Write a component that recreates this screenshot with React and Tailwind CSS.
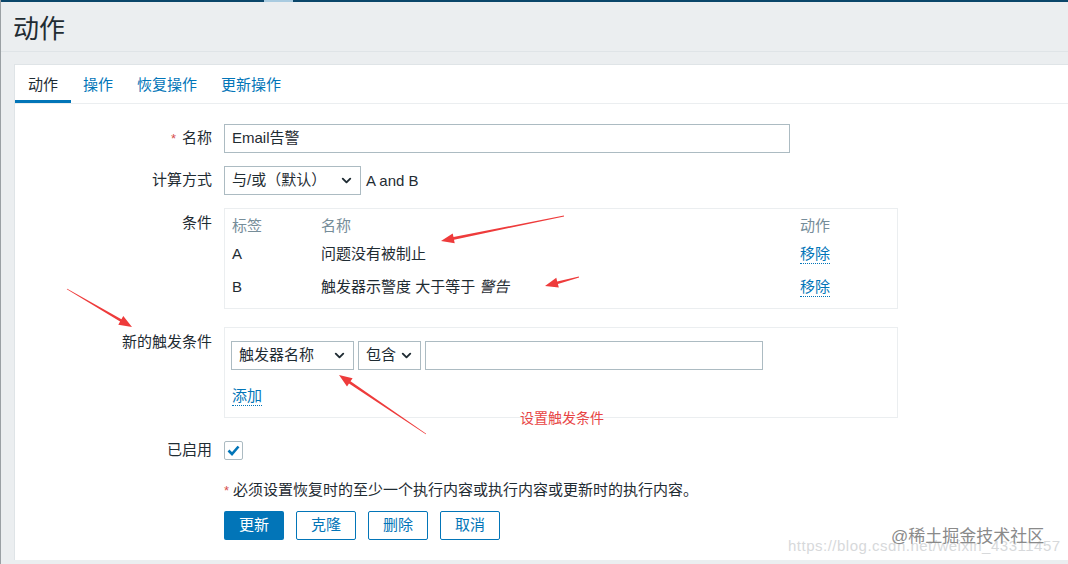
import React from "react";
import { ChevronDown } from "lucide-react";

const font = { fontFamily: 'Arial, "Liberation Sans", "Noto Sans CJK SC", sans-serif' };

function Select({ text, className }) {
  return (
    <div
      className={
        "flex items-center justify-between h-[29px] border border-[#acbbc2] bg-white pl-[7px] pr-[6px] text-[15px] text-[#1f2c33] " +
        className
      }
    >
      <span>{text}</span>
      <ChevronDown className="h-[15px] w-[15px] text-[#1f2c33]" strokeWidth={3} />
    </div>
  );
}

function Row({ label, required, top, children, className = "" }) {
  return (
    <div className={"flex " + (top ? "items-start " : "items-center ") + className}>
      <div className={"w-[197px] shrink-0 text-right text-[15px] text-[#1f2c33] " + (top ? "pt-[4px]" : "")}>
        {required && <span className="text-[#d64e4e] mr-[6px] text-[13px]">*</span>}
        {label}
      </div>
      <div className="ml-3 flex-1">{children}</div>
    </div>
  );
}

function Link({ children }) {
  return (
    <span className="text-[#0275b8] border-b border-dotted border-[#0275b8] pb-[1px] leading-none">
      {children}
    </span>
  );
}

function arrowPoints(tx, ty, px, py) {
  const dx = px - tx;
  const dy = py - ty;
  const len = Math.hypot(dx, dy);
  const ux = dx / len;
  const uy = dy / len;
  const nx = -uy;
  const ny = ux;
  const L = 13;
  const bx = px - ux * L;
  const by = py - uy * L;
  const pts = [
    [tx + nx * 0.4, ty + ny * 0.4],
    [bx + nx * 1.3, by + ny * 1.3],
    [bx + nx * 5, by + ny * 5],
    [px, py],
    [bx - nx * 5, by - ny * 5],
    [bx - nx * 1.3, by - ny * 1.3],
    [tx - nx * 0.4, ty - ny * 0.4],
  ];
  return pts.map((p) => p[0].toFixed(1) + "," + p[1].toFixed(1)).join(" ");
}

const arrows = [
  [563, 216, 440, 241],
  [578, 277, 544, 286],
  [66, 289, 131, 327],
  [425, 434, 338, 375],
];

export default function App() {
  return (
    <div className="relative w-[1068px] h-[564px] overflow-hidden bg-[#ebeef0] border-l border-[#9aa0a4]" style={font}>
      {/* top bar */}
      <div className="h-[2px] bg-[#0a466a] flex">
        <div className="ml-[263px] w-[29px] h-[2px] bg-[#a9cbe0]" />
      </div>

      {/* header */}
      <div className="h-[50px] flex items-center pl-[12px] pt-[6px] border-b border-[#dfe4e7]">
        <h1 className="text-[26px] text-[#1f2c33] font-normal">动作</h1>
      </div>

      {/* panel */}
      <div className="mt-[12px] ml-[13px] bg-white border-t border-l border-[#dfe4e7] h-[496px]">
        {/* tabs */}
        <div className="flex h-[39px] border-b border-[#ebeef0] text-[15px]">
          <div className="px-[13px] flex items-center text-[#1f2c33] border-b-[3px] border-[#0275b8] pt-[6px]">动作</div>
          <div className="px-[12px] flex items-center text-[#0275b8] pt-[6px] border-b-[3px] border-transparent">操作</div>
          <div className="px-[12px] flex items-center text-[#0275b8] pt-[6px] border-b-[3px] border-transparent">恢复操作</div>
          <div className="px-[12px] flex items-center text-[#0275b8] pt-[6px] border-b-[3px] border-transparent">更新操作</div>
        </div>

        <div className="pt-[20px] flex flex-col">
          <Row label="名称" required>
            <div className="w-[566px] h-[29px] border border-[#acbbc2] flex items-center px-[7px] text-[15px] text-[#1f2c33]">
              Email告警
            </div>
          </Row>

          <Row label="计算方式" className="mt-[13px]">
            <div className="flex items-center gap-[5px]">
              <Select text="与/或（默认）" className="w-[137px]" />
              <span className="text-[15px] text-[#1f2c33] pt-[2px]">A and B</span>
            </div>
          </Row>

          <Row label="条件" top className="mt-[13px]">
            <div className="w-[674px] h-[101px] border border-[#ebeef0] px-[7px] pt-[7px] text-[15px]">
              <div className="flex h-[20px] items-center text-[#768d99]">
                <div className="w-[89px]">标签</div>
                <div className="flex-1">名称</div>
                <div className="w-[90px]">动作</div>
              </div>
              <div className="flex h-[33px] items-center text-[#1f2c33] pt-[4px]">
                <div className="w-[89px]">A</div>
                <div className="flex-1">问题没有被制止</div>
                <div className="w-[90px]"><Link>移除</Link></div>
              </div>
              <div className="flex h-[33px] items-center text-[#1f2c33] pt-[4px]">
                <div className="w-[89px]">B</div>
                <div className="flex-1">
                  触发器示警度 大于等于 <em className="italic">警告</em>
                </div>
                <div className="w-[90px]"><Link>移除</Link></div>
              </div>
            </div>
          </Row>

          <Row label="新的触发条件" top className="mt-[18px]">
            <div className="w-[674px] h-[91px] border border-[#ebeef0] pl-[6px] pt-[13px] text-[15px]">
              <div className="flex items-center gap-[4px]">
                <Select text="触发器名称" className="w-[123px]" />
                <Select text="包含" className="w-[63px]" />
                <div className="w-[338px] h-[29px] border border-[#acbbc2]" />
              </div>
              <div className="mt-[15px] ml-[1px]">
                <Link>添加</Link>
              </div>
            </div>
          </Row>

          <Row label="已启用" className="mt-[21px]">
            <div className="w-[19px] h-[19px] border border-[#acbbc2] rounded-[2px] flex items-center justify-center bg-white">
              <svg width="13" height="11" viewBox="0 0 13 11">
                <path d="M1.5 5.5 L5 9 L11.5 1.5" fill="none" stroke="#0275b8" strokeWidth="2.6" />
              </svg>
            </div>
          </Row>

          <Row label="" className="mt-[17px]">
            <div className="text-[15px] text-[#1f2c33]">
              <span className="text-[#d64e4e] text-[13px] mr-[4px]">*</span>
              必须设置恢复时的至少一个执行内容或执行内容或更新时的执行内容。
            </div>
          </Row>

          <Row label="" className="mt-[10px]">
            <div className="flex gap-[12px] text-[15px]">
              <button className="w-[60px] h-[29px] rounded-[2px] bg-[#0275b8] text-white">更新</button>
              <button className="w-[60px] h-[29px] rounded-[2px] border border-[#0275b8] text-[#0275b8] bg-white">克隆</button>
              <button className="w-[60px] h-[29px] rounded-[2px] border border-[#0275b8] text-[#0275b8] bg-white">删除</button>
              <button className="w-[60px] h-[29px] rounded-[2px] border border-[#0275b8] text-[#0275b8] bg-white">取消</button>
            </div>
          </Row>
        </div>
      </div>

      {/* annotations */}
      <svg className="absolute left-0 top-0 pointer-events-none" width="1068" height="564">
        {arrows.map((a, i) => (
          <polygon key={i} points={arrowPoints(a[0], a[1], a[2], a[3])} fill="#ee3b3b" />
        ))}
      </svg>
      <div className="absolute left-[519px] top-[408px] text-[14px] text-[#e84545]">设置触发条件</div>

      {/* watermark */}
      <div className="absolute left-[787px] top-[535px] text-[15px] text-[#d7d9db] tracking-[0.5px]">
        https://blog.csdn.net/weixin_43311457
      </div>
      <div className="absolute left-[890px] top-[524px] text-[17px] text-[#8a8a8a]">@稀土掘金技术社区</div>
    </div>
  );
}
